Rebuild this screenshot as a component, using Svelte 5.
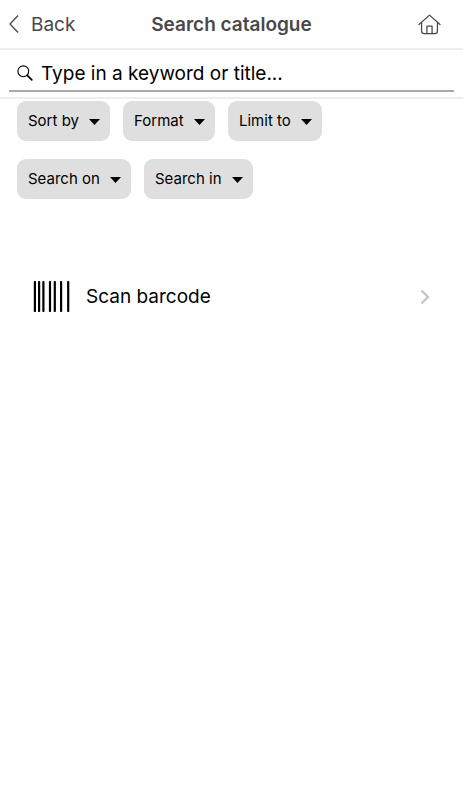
<script lang="ts">
	type Filter = { id: string; label: string };

	const filters: Filter[] = [
		{ id: 'sort', label: 'Sort by' },
		{ id: 'format', label: 'Format' },
		{ id: 'limit', label: 'Limit to' },
		{ id: 'search-on', label: 'Search on' },
		{ id: 'search-in', label: 'Search in' }
	];

	// x position of each barcode line
	const bars = [0.8, 5, 9.3, 15.9, 20.7, 27, 34.1];

	let query = $state('');
</script>

<div class="page">
	<header class="topbar">
		<a class="back" href="#back">
			<svg width="10" height="20" viewBox="0 0 10 20" aria-hidden="true">
				<path d="M9 1.5 L1 10 L9 18.5" fill="none" stroke="currentColor" stroke-width="1.3" />
			</svg>
			<span>Back</span>
		</a>
		<h1 class="title">Search catalogue</h1>
		<a class="home" href="#home" aria-label="Home">
			<svg width="23" height="21" viewBox="0 0 24 22" aria-hidden="true">
				<g fill="none" stroke="currentColor" stroke-width="1.3" stroke-linecap="round" stroke-linejoin="round">
					<path d="M1 11 L12 1.2 L23 11" />
					<path d="M3.7 9 V17.8 Q3.7 20.6 6.5 20.6 H17.5 Q20.3 20.6 20.3 17.8 V9" />
					<path d="M9.3 20.5 V12.6 H14.7 V20.5" />
				</g>
			</svg>
		</a>
	</header>

	<form class="search" role="search" onsubmit={(e) => e.preventDefault()}>
		<label class="field">
			<svg width="16" height="16" viewBox="0 0 16 16" aria-hidden="true">
				<g fill="none" stroke="currentColor" stroke-linecap="round">
					<circle cx="6.3" cy="6.3" r="5.4" stroke-width="1.1" />
					<path d="M10.3 10.3 L14.8 14.8" stroke-width="1.7" />
				</g>
			</svg>
			<input
				type="text"
				placeholder="Type in a keyword or title..."
				aria-label="Type in a keyword or title"
				bind:value={query}
			/>
		</label>
	</form>

	<div class="filters">
		{#each filters as filter (filter.id)}
			<div class="chip">
				<select id={filter.id} aria-label={filter.label}>
					<option>{filter.label}</option>
				</select>
				<svg class="caret" width="11" height="6" viewBox="0 0 11 6" aria-hidden="true">
					<path d="M0 0 H11 L5.5 6 Z" />
				</svg>
			</div>
		{/each}
	</div>

	<button class="scan" type="button">
		<svg width="37" height="31" viewBox="0 0 37 31" aria-hidden="true">
			{#each bars as x}
				<rect {x} y="0" width="2.2" height="31" rx="0.8" />
			{/each}
		</svg>
		<span class="scan-label">Scan barcode</span>
		<svg class="chevron" width="10" height="16" viewBox="0 0 10 16" aria-hidden="true">
			<path d="M1.5 1.5 L8 8 L1.5 14.5" fill="none" stroke="currentColor" stroke-width="2.2" />
		</svg>
	</button>
</div>

<style>
	:global(body) {
		background: #fff;
	}

	.page {
		font-family: Inter, 'Liberation Sans', sans-serif;
		color: #000;
	}

	.topbar {
		display: grid;
		grid-template-columns: 1fr auto 1fr;
		align-items: center;
		height: 48px;
		padding: 0 9px;
		border-bottom: 2px solid #eee;
	}

	.back {
		display: flex;
		align-items: center;
		gap: 12px;
		font-size: 19px;
		color: #48484a;
		text-decoration: none;
	}

	.title {
		margin: 0;
		font-size: 19px;
		font-weight: 600;
		color: #48484a;
	}

	.home {
		display: flex;
		justify-self: end;
		padding-right: 13px;
		color: #48484a;
	}

	.search {
		padding: 6px 9px 5px;
		border-bottom: 2px solid #eee;
	}

	.field {
		display: flex;
		align-items: center;
		gap: 8px;
		height: 34px;
		padding-left: 8px;
		border-bottom: 2px solid #aaa;
	}

	.field input {
		flex: 1;
		min-width: 0;
		padding: 0;
		border: 0;
		outline: none;
		background: transparent;
		font: inherit;
		font-size: 19px;
		color: #000;
	}
	.field input::placeholder {
		color: #000;
		opacity: 1;
	}

	.filters {
		display: flex;
		flex-wrap: wrap;
		gap: 18px 13px;
		padding: 2px 120px 0 17px;
	}

	.chip {
		position: relative;
	}

	.chip select {
		display: block;
		height: 40px;
		padding: 0 31px 1px 11px;
		border: 0;
		border-radius: 9px;
		appearance: none;
		background: #dfdfdf;
		font: inherit;
		font-size: 15px;
		color: #000;
	}

	.caret {
		position: absolute;
		top: 18px;
		right: 10px;
		pointer-events: none;
	}

	.scan {
		display: flex;
		align-items: center;
		width: 100%;
		margin-top: 70px;
		padding: 12px 33px;
		border: 0;
		background: transparent;
		font: inherit;
		font-size: 19px;
		color: #000;
		text-align: left;
	}

	.scan-label {
		flex: 1;
		margin-left: 16px;
	}

	.chevron {
		color: #c4c4c7;
	}
</style>
